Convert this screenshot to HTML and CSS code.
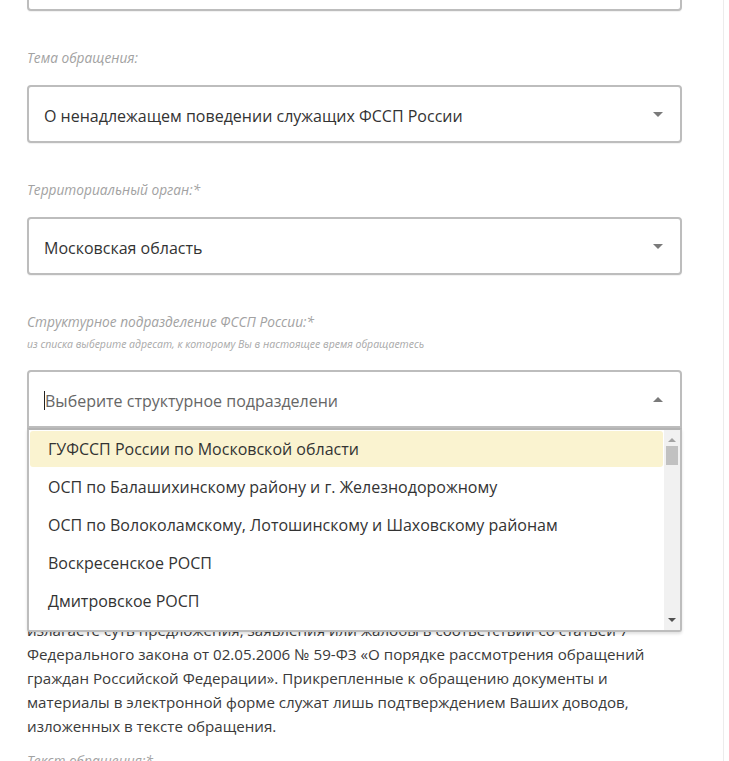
FILE: index.html
```html
<!DOCTYPE html>
<html lang="ru">
<head>
<meta charset="utf-8">
<title>Обращение</title>
<link rel="stylesheet" href="styles.css">
</head>
<body>
<div class="page">
  <div class="form">
    <div class="select select-top"></div>

    <div class="field">
      <div class="label">Тема обращения:</div>
      <div class="select">
        <span class="value">О ненадлежащем поведении служащих ФССП России</span>
        <span class="arrow arrow-down"></span>
      </div>
    </div>

    <div class="field">
      <div class="label">Территориальный орган:*</div>
      <div class="select">
        <span class="value">Московская область</span>
        <span class="arrow arrow-down"></span>
      </div>
    </div>

    <div class="field">
      <div class="label">Структурное подразделение ФССП России:*</div>
      <div class="hint">из списка выберите адресат, к которому Вы в настоящее время обращаетесь</div>
      <div class="combo">
        <div class="select select-open">
          <span class="caret"></span>
          <span class="placeholder">Выберите структурное подразделени</span>
          <span class="arrow arrow-up"></span>
        </div>
        <div class="dropdown">
          <ul class="options">
            <li class="option option-active">ГУФССП России по Московской области</li>
            <li class="option">ОСП по Балашихинскому району и г. Железнодорожному</li>
            <li class="option">ОСП по Волоколамскому, Лотошинскому и Шаховскому районам</li>
            <li class="option">Воскресенское РОСП</li>
            <li class="option">Дмитровское РОСП</li>
          </ul>
          <div class="scrollbar">
            <span class="sb-up"></span>
            <span class="sb-thumb"></span>
            <span class="sb-space"></span>
            <span class="sb-down"></span>
          </div>
        </div>
      </div>
    </div>

    <p class="note">излагаете суть предложения, заявления или жалобы в соответствии со статьей 7<br>Федерального закона от 02.05.2006 № 59-ФЗ «О порядке рассмотрения обращений<br>граждан Российской Федерации». Прикрепленные к обращению документы и<br>материалы в электронной форме служат лишь подтверждением Ваших доводов,<br>изложенных в тексте обращения.</p>

    <div class="label label-last">Текст обращения:*</div>
  </div>
</div>
</body>
</html>
```

FILE: styles.css
```css
* {
  box-sizing: border-box;
}

html, body {
  margin: 0;
  padding: 0;
  background: #ffffff;
  overflow: hidden;
}

body {
  font-family: "Open Sans", "DejaVu Sans", sans-serif;
  color: #333333;
}

.page {
  width: 724px;
  min-height: 100vh;
  border-right: 1px solid #ececec;
}

.form {
  width: 682px;
  padding-left: 27px;
}

.select {
  position: relative;
  display: flex;
  align-items: center;
  height: 58px;
  padding: 3px 15px 0;
  border: 2px solid #bdbdbd;
  border-radius: 4px;
  background: #ffffff;
  box-shadow: 0 1px 1px rgba(0, 0, 0, 0.06);
}

.select-top {
  margin-top: -47px;
}

.field {
  margin-top: 38px;
}

.field:first-of-type {
  margin-top: 39px;
}

.label {
  font-size: 13.7px;
  line-height: 18px;
  font-style: italic;
  color: #a2a2a2;
  margin-bottom: 18px;
}

.hint {
  font-size: 10.5px;
  line-height: 14px;
  font-style: italic;
  color: #a8a8a8;
  margin-top: -12px;
  margin-bottom: 19px;
}

.value {
  flex: 1;
  font-size: 16px;
  color: #333333;
  white-space: nowrap;
}

.placeholder {
  flex: 1;
  font-size: 16px;
  color: #666666;
  white-space: nowrap;
}

.caret {
  width: 1px;
  height: 19px;
  background: #222222;
}

.arrow {
  width: 0;
  height: 0;
  border-left: 5px solid transparent;
  border-right: 5px solid transparent;
  margin-right: 2px;
  margin-top: -2px;
}

.arrow-down {
  border-top: 5px solid #7a7a7a;
}

.arrow-up {
  border-bottom: 5px solid #7a7a7a;
}

.combo {
  position: relative;
}

.select-open {
  border-radius: 4px 4px 0 0;
}

.dropdown {
  position: absolute;
  left: 0;
  right: 0;
  top: 100%;
  height: 204px;
  display: flex;
  gap: 1px;
  border: 2px solid #bdbdbd;
  border-top-color: #b3b3b3;
  border-radius: 0 0 3px 3px;
  background: #ffffff;
  box-shadow: 0 2px 3px rgba(0, 0, 0, 0.12);
  z-index: 5;
}

.options {
  flex: 1;
  display: flex;
  flex-direction: column;
  gap: 2px;
  margin: 0;
  padding: 1px 0 0 1px;
  list-style: none;
  overflow: hidden;
}

.option {
  flex: none;
  height: 36px;
  padding-left: 18px;
  display: flex;
  align-items: center;
  font-size: 16px;
  color: #333333;
  white-space: nowrap;
  border-radius: 3px;
}

.option-active {
  background: #faf3d0;
}

.scrollbar {
  width: 16px;
  display: flex;
  flex-direction: column;
  align-items: center;
  background: #f1f1f1;
}

.sb-up {
  margin-top: 8px;
  width: 0;
  height: 0;
  border-left: 4px solid transparent;
  border-right: 4px solid transparent;
  border-bottom: 4px solid #a3a3a3;
}

.sb-thumb {
  margin-top: 4px;
  width: 12px;
  height: 19px;
  background: #c1c1c1;
}

.sb-space {
  flex: 1;
}

.sb-down {
  margin-bottom: 8px;
  width: 0;
  height: 0;
  border-left: 4px solid transparent;
  border-right: 4px solid transparent;
  border-top: 4px solid #505050;
}

.note {
  margin: 190px 0 0;
  font-size: 15.15px;
  line-height: 24px;
  color: #3a3a3a;
}

.label-last {
  margin-top: 14px;
}
```
